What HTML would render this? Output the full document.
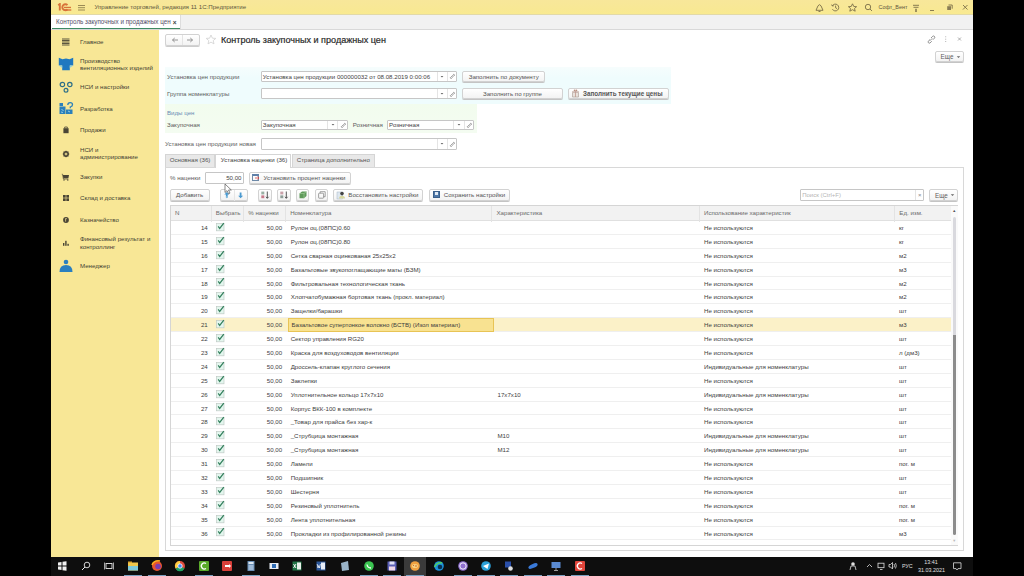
<!DOCTYPE html>
<html><head><meta charset="utf-8">
<style>
*{box-sizing:border-box;margin:0;padding:0}
html,body{width:1024px;height:576px;overflow:hidden;background:#000}
#wrap{position:absolute;left:0;top:0;width:1024px;height:576px;}
body{font-family:"Liberation Sans",sans-serif;font-size:6.15px;color:#4a4a4a;position:relative}
.a{position:absolute;white-space:nowrap;line-height:8px}
.box{position:absolute}
#scr{position:absolute;left:51px;top:0;width:922px;height:557px;background:#fff}
#top{position:absolute;left:51px;top:0;width:922px;height:15px;background:linear-gradient(#f8e79a,#f8e894 70%,#f9ea90);border-bottom:1px solid #e2d9a8}
#tabs{position:absolute;left:51px;top:15px;width:922px;height:15px;background:#f1f1f1;border-bottom:1px solid #d8d8d8}
#side{position:absolute;left:51px;top:30px;width:108px;height:527px;background:#f8e796}
#task{position:absolute;left:51px;top:557px;width:922px;height:19px;background:#0e0e0e}
.btn{position:absolute;border:1px solid #d2d2d2;border-radius:2px;background:linear-gradient(#fff,#f3f3f3);box-shadow:0 1px 0 #c4c4c4;display:flex;align-items:center;justify-content:center;color:#555;white-space:nowrap}
.btn.l{justify-content:flex-start}
.inp{position:absolute;border:1px solid #c6c6c6;border-radius:1px;background:#fff;display:flex;align-items:center;padding-left:1.2px;color:#444;white-space:nowrap}
.dd{position:absolute;top:0;bottom:0;border-left:1px solid #e4e4e4;display:flex;align-items:center;justify-content:center}
.dd svg{display:block}
.lbl{position:absolute;white-space:nowrap;line-height:8px;color:#5e5e5e}
.side .a{color:#433f34}
.row{position:absolute;left:171px;width:781px;height:13.89px;border-bottom:1px solid #efefef}
.row .c{position:absolute;top:0;line-height:13.3px;white-space:nowrap;color:#404040}
.cn{left:0;width:36.8px;text-align:right}
.cp{left:74px;width:37.2px;text-align:right}
.nm{left:119.7px}
.ch{left:326.5px}
.us{left:533px}
.un{left:728px}
.chk{position:absolute;left:45px;top:0.9px}
.sel{background:#fbf1c8}
.hl{top:0 !important;height:13.5px;line-height:11.5px !important;left:116.5px !important;width:206px;border:1px solid #e8c455;background:#f8e291;padding-left:3px}
.hdr{position:absolute;top:0;height:15.5px;line-height:13.9px;color:#6a6a6a;white-space:nowrap;border-right:1px solid #e3e3e3;padding-left:4px}
</style></head><body><div id="wrap">
<div id="scr"></div>
<!-- top bar -->
<div id="top"></div>
<svg class="box" style="left:57px;top:3px" width="16" height="9"><path d="M1.2 2.2 L2.8 1 L2.8 7.5" fill="none" stroke="#d8733a" stroke-width="1.9"/><path d="M10.5 2.2 A3 3 0 1 0 10.5 6.4" fill="none" stroke="#d8733a" stroke-width="1.9"/><rect x="7" y="3.8" width="7" height="1.3" fill="#d8733a"/><rect x="6.5" y="6.3" width="7.8" height="1.4" fill="#d8733a"/></svg>

<div class="box" style="left:78px;top:4.6px;width:7px;height:1px;background:#9a8a55;box-shadow:0 2.2px 0 #9a8a55,0 4.5px 0 #9a8a55"></div>
<div class="a" style="left:94.4px;top:3.1px;color:#615840">Управление торговлей, редакция 11 1С:Предприятие</div>
<!-- top right icons -->
<svg class="box" style="left:814px;top:2px" width="160" height="11" viewBox="0 0 160 11" fill="none" stroke="#7b6e48" stroke-width="0.9">
  <path d="M2 8.3 L4 3.8 Q5.5 1.5 7 3.8 L9 8.3 Z M4.5 9.5 L6.5 9.5"/>
  <path d="M18.3 4 A3.4 3.4 0 1 1 18.4 7.2 M18.3 4 L17.6 2.6 M18.3 4 L19.8 3.8 M21.6 3.6 L21.6 5.8 L23 6.6"/>
  <path d="M38.5 1.8 L39.8 4.5 L42.6 4.7 L40.5 6.5 L41.2 9.2 L38.5 7.7 L35.8 9.2 L36.5 6.5 L34.4 4.7 L37.2 4.5 Z"/>
  <circle cx="54" cy="5" r="2.7"/><path d="M56 7 L58 9"/>
  <path d="M99 3.3 L105 3.3 M99.5 5.3 L104.5 5.3 M101 7.3 L103 7.3"/><circle cx="102" cy="9" r="0.6" fill="#7b6e48"/>
  <path d="M116 8.5 L120 8.5"/>
  <rect x="133.2" y="4.2" width="3.8" height="3.8" fill="#8a7d55" stroke="none"/><path d="M134.5 3 L138.2 3 L138.2 6.7"/>
  <path d="M149 3 L153.5 7.5 M153.5 3 L149 7.5"/>
</svg>
<div class="a" style="left:878.5px;top:3.3px;color:#5e5540;font-size:5.45px">Софт_Вент</div>
<!-- tab bar -->
<div id="tabs"></div>
<div class="box" style="left:51px;top:15px;width:130px;height:14px;background:#fff;border-right:1px solid #ddd"></div>
<div class="box" style="left:52px;top:27.8px;width:128px;height:1.3px;background:#3e8a63"></div>
<div class="a" style="left:56px;top:18px;color:#55506a;font-size:6.3px">Контроль закупочных и продажных цен</div>
<div class="a" style="left:172.8px;top:18.6px;color:#444;font-size:6.5px;font-weight:bold">×</div>
<!-- sidebar -->
<div id="side"></div>
<div class="side">
<svg class="box" style="left:51px;top:31.50px" width="30" height="20" viewBox="-15 -10 30 20"><path d="M-4 -3 L3.5 -3 M-4 -1.5 L3.5 -1.5 M-4 0 L3.5 0 M-4 1.5 L3.5 1.5 M-4 3 L3.5 3" stroke="#4a4536" stroke-width="0.9"/></svg>
<div class="a" style="left:80px;top:37.50px">Главное</div>
<svg class="box" style="left:51px;top:54.40px" width="30" height="20" viewBox="-15 -10 30 20"><path d="M-7.2 -6.2 L-3.5 -4.8 L0 -5.4 L3.5 -4.8 L7.2 -6.2 L7.2 1.6 L3.8 1.6 L3.8 6.3 L-3.8 6.3 L-3.8 1.6 L-7.2 1.6 Z" fill="#1f78c0"/><path d="M-7.2 1.6 L-3.8 1.6 L-3.8 4 Z M7.2 1.6 L3.8 1.6 L3.8 4 Z" fill="#8fd0e0"/></svg>
<div class="a" style="left:80px;top:56.60px">Производство</div>
<div class="a" style="left:80px;top:64.20px">вентиляционных изделий</div>
<svg class="box" style="left:51px;top:77.30px" width="30" height="20" viewBox="-15 -10 30 20"><circle cx="-3.6" cy="-2.5" r="2.2" fill="none" stroke="#2d6f88" stroke-width="1.2"/><circle cx="3.8" cy="-2.5" r="2.2" fill="none" stroke="#2d6f88" stroke-width="1.2"/><circle cx="0" cy="3.3" r="1.9" fill="none" stroke="#2d6f88" stroke-width="1.2"/></svg>
<div class="a" style="left:80px;top:83.30px">НСИ и настройки</div>
<svg class="box" style="left:51px;top:98.70px" width="30" height="20" viewBox="-15 -10 30 20"><rect x="-6.5" y="-2.5" width="6" height="7.5" fill="#2a80bb"/><rect x="-6.5" y="-6" width="3.5" height="3" fill="#2a80bb"/><rect x="0" y="0.5" width="6.5" height="4.5" fill="#2a80bb"/><path d="M-4.5 0 L-2.5 2 M-5 3 L-3 3.5 M2 2 L4 3" stroke="#9fd4ea" stroke-width="0.9"/><path d="M1.8 -4 Q1.8 -6.3 4.2 -6.3 Q6.5 -6.3 6.5 -4.3 Q6.5 -2.8 4.3 -2 L4.3 -0.8" fill="none" stroke="#2a80bb" stroke-width="1.3"/></svg>
<div class="a" style="left:80px;top:104.70px">Разработка</div>
<svg class="box" style="left:51px;top:120.30px" width="30" height="20" viewBox="-15 -10 30 20"><rect x="-2.6" y="-1.8" width="5.2" height="5" fill="#4a4535"/><path d="M-1.3 -1.8 L-1.3 -3 L1.3 -3 L1.3 -1.8" fill="none" stroke="#4a4535" stroke-width="0.8"/></svg>
<div class="a" style="left:80px;top:126.30px">Продажи</div>
<svg class="box" style="left:51px;top:143.50px" width="30" height="20" viewBox="-15 -10 30 20"><circle cx="0" cy="0" r="2.2" fill="none" stroke="#4a4535" stroke-width="1.5"/><path d="M0 -3.3 L0 3.3 M-3.3 0 L3.3 0 M-2.3 -2.3 L2.3 2.3 M-2.3 2.3 L2.3 -2.3" stroke="#4a4535" stroke-width="0.8"/><circle r="1" fill="#f8e796"/></svg>
<div class="a" style="left:80px;top:145.70px">НСИ и</div>
<div class="a" style="left:80px;top:153.30px">администрирование</div>
<svg class="box" style="left:51px;top:166.75px" width="30" height="20" viewBox="-15 -10 30 20"><path d="M-3.3 -2 L3 -2 L2.4 1.2 L-2.6 1.2 Z" fill="#4a4535"/><path d="M-4.2 -2.8 L-3.4 -2.8 L-2.6 2 L2.2 2" fill="none" stroke="#4a4535" stroke-width="0.7"/><circle cx="-2" cy="3" r="0.7" fill="#4a4535"/><circle cx="1.8" cy="3" r="0.7" fill="#4a4535"/></svg>
<div class="a" style="left:80px;top:172.75px">Закупки</div>
<svg class="box" style="left:51px;top:188.00px" width="30" height="20" viewBox="-15 -10 30 20"><rect x="-3" y="-3" width="2.7" height="2.7" fill="#4a4535"/><rect x="0.3" y="-3" width="2.7" height="2.7" fill="#4a4535"/><rect x="-3" y="0.3" width="2.7" height="2.7" fill="#4a4535"/><rect x="0.3" y="0.3" width="2.7" height="2.7" fill="#4a4535"/></svg>
<div class="a" style="left:80px;top:194.00px">Склад и доставка</div>
<svg class="box" style="left:51px;top:209.50px" width="30" height="20" viewBox="-15 -10 30 20"><circle cx="0" cy="0" r="2.9" fill="#4a4535"/><path d="M-0.4 -1.4 L0.9 -1.4 M-0.4 -1.6 L-0.4 1.6" stroke="#f8e796" stroke-width="0.7"/></svg>
<div class="a" style="left:80px;top:215.50px">Казначейство</div>
<svg class="box" style="left:51px;top:232.75px" width="30" height="20" viewBox="-15 -10 30 20"><rect x="-3" y="0" width="1.4" height="2.8" fill="#4a4535"/><rect x="-0.8" y="-2.2" width="1.4" height="5" fill="#4a4535"/><rect x="1.4" y="0.8" width="1.4" height="2" fill="#4a4535"/></svg>
<div class="a" style="left:80px;top:234.95px">Финансовый результат и</div>
<div class="a" style="left:80px;top:242.55px">контроллинг</div>
<svg class="box" style="left:51px;top:256.25px" width="30" height="20" viewBox="-15 -10 30 20"><circle cx="0" cy="-4" r="2.3" fill="#2a7fbf"/><path d="M-6.5 6 Q-6.5 -1 0 -1 Q6.5 -1 6.5 6 Z" fill="#2a7fbf"/></svg>
<div class="a" style="left:80px;top:262.25px">Менеджер</div>
</div>
<!-- content header -->
<div class="btn" style="left:165px;top:34.3px;width:35px;height:11.3px;box-shadow:0 1px 0 #ccc"></div>
<div class="box" style="left:182px;top:35px;width:1px;height:10px;background:#e4e4e4"></div>
<svg class="box" style="left:165px;top:34px" width="36" height="12" fill="none" stroke="#888" stroke-width="0.9"><path d="M7.5 6 L13 6 M7.5 6 L9.7 4 M7.5 6 L9.7 8"/><path d="M22 6 L27.5 6 M27.5 6 L25.3 4 M27.5 6 L25.3 8"/></svg>
<svg class="box" style="left:205px;top:34px" width="12" height="12" fill="none" stroke="#d6d6d6" stroke-width="0.9"><path d="M6 1 L7.4 4.2 L10.8 4.4 L8.2 6.6 L9 9.9 L6 8.1 L3 9.9 L3.8 6.6 L1.2 4.4 L4.6 4.2 Z"/></svg>
<div class="a" style="left:221px;top:35px;font-size:9.05px;line-height:10px;color:#2a2a2a;-webkit-text-stroke:0.2px #2a2a2a">Контроль закупочных и продажных цен</div>
<svg class="box" style="left:925px;top:34px" width="42" height="10" fill="none" stroke="#777" stroke-width="0.8"><path d="M5 5.5 L3.2 7.3 A1.3 1.3 0 0 0 5 9 L6.8 7.2 M6 4 L7.8 2.2 A1.3 1.3 0 0 1 9.6 4 L7.8 5.8 M4.8 6.8 L7.2 4.4"/><path d="M20.7 2.5 L20.7 3.2 M20.7 4.8 L20.7 5.5 M20.7 7 L20.7 7.7"/><path d="M33 3.5 L36 6.5 M36 3.5 L33 6.5" stroke="#999"/></svg>
<div class="btn" style="left:935px;top:50.6px;width:28.5px;height:11.8px;color:#5e5e5e;font-size:6.3px;padding-left:3px;padding-top:0.5px">Еще<svg width="5" height="4" style="margin-left:2.5px"><path d="M0.8 1.2 L4.2 1.2 L2.5 3 Z" fill="#666"/></svg></div>

<!-- header form -->
<div class="box" style="left:165px;top:66.5px;width:506px;height:37.5px;background:linear-gradient(#f6fdfd,#effcfd 30%,#effcfd)"></div>
<div class="box" style="left:165px;top:104px;width:312px;height:29.2px;background:linear-gradient(#f2fcee,#f4fcf1)"></div>
<div class="lbl" style="left:167px;top:72.5px">Установка цен продукции</div>
<div class="inp" style="left:260.6px;top:70.7px;width:196.6px;height:11.2px">Установка цен продукции 000000032 от 08.08.2019 0:00:06<span class="dd" style="left:175px;width:10px"><svg width="4" height="3"><path d="M0.6 1 L3.4 1 L2 2.4 Z" fill="#666"/></svg></span><span class="dd" style="left:185px;width:10.6px"><svg width="6" height="6" fill="none" stroke="#777" stroke-width="0.7"><path d="M2.6 3.4 L1.3 4.7 A0.9 0.9 0 0 0 2.6 5.3 L3.6 4.3 M3.4 2.6 L4.7 1.3 A0.9 0.9 0 0 1 5.3 2.6 L4.3 3.6 M2.4 4 L4 2.4"/></svg></span></div>
<div class="btn" style="left:462px;top:70.7px;width:83.4px;height:11.2px">Заполнить по документу</div>
<div class="lbl" style="left:167px;top:89.6px">Группа номенклатуры</div>
<div class="inp" style="left:260.6px;top:88.3px;width:196.6px;height:10.9px"><span class="dd" style="left:175px;width:10px"><svg width="4" height="3"><path d="M0.6 1 L3.4 1 L2 2.4 Z" fill="#666"/></svg></span><span class="dd" style="left:185px;width:10.6px"><svg width="6" height="6" fill="none" stroke="#777" stroke-width="0.7"><path d="M2.6 3.4 L1.3 4.7 A0.9 0.9 0 0 0 2.6 5.3 L3.6 4.3 M3.4 2.6 L4.7 1.3 A0.9 0.9 0 0 1 5.3 2.6 L4.3 3.6 M2.4 4 L4 2.4"/></svg></span></div>
<div class="btn" style="left:462px;top:87.5px;width:101px;height:11.8px">Заполнить по группе</div>
<div class="btn l" style="left:568px;top:87.5px;width:101.4px;height:11.8px;font-weight:bold;color:#555;font-size:6.3px;padding-left:14px;padding-top:1px">Заполнить текущие цены</div>
<svg class="box" style="left:571px;top:89px" width="9" height="9"><path d="M1.5 3.5 L7.5 3.5 L7.5 8 L1.5 8 Z" fill="#e9e2dc" stroke="#b0a49c" stroke-width="0.7"/><path d="M1 2.2 L8 2.2 L8 3.6 L1 3.6 Z" fill="#d0bcb6"/><path d="M4.5 2.2 L4.5 8" stroke="#c09a90" stroke-width="0.8"/><circle cx="3.6" cy="1.4" r="0.9" fill="#b89080"/><circle cx="5.4" cy="1.4" r="0.9" fill="#b89080"/></svg>
<div class="lbl" style="left:167px;top:109px;color:#6a8cb5">Виды цен</div>
<div class="lbl" style="left:167px;top:121px">Закупочная</div>
<div class="inp" style="left:260.6px;top:119.6px;width:87px;height:10.8px">Закупочная<span class="dd" style="left:65.8px;width:10px"><svg width="4" height="3"><path d="M0.6 1 L3.4 1 L2 2.4 Z" fill="#666"/></svg></span><span class="dd" style="left:75.8px;width:10px"><svg width="6" height="6" fill="none" stroke="#777" stroke-width="0.7"><path d="M2.6 3.4 L1.3 4.7 A0.9 0.9 0 0 0 2.6 5.3 L3.6 4.3 M3.4 2.6 L4.7 1.3 A0.9 0.9 0 0 1 5.3 2.6 L4.3 3.6 M2.4 4 L4 2.4"/></svg></span></div>
<div class="lbl" style="left:352.7px;top:121px">Розничная</div>
<div class="inp" style="left:386.9px;top:119.6px;width:87.5px;height:10.8px">Розничная<span class="dd" style="left:65.4px;width:10.5px"><svg width="4" height="3"><path d="M0.6 1 L3.4 1 L2 2.4 Z" fill="#666"/></svg></span><span class="dd" style="left:76px;width:10px"><svg width="6" height="6" fill="none" stroke="#777" stroke-width="0.7"><path d="M2.6 3.4 L1.3 4.7 A0.9 0.9 0 0 0 2.6 5.3 L3.6 4.3 M3.4 2.6 L4.7 1.3 A0.9 0.9 0 0 1 5.3 2.6 L4.3 3.6 M2.4 4 L4 2.4"/></svg></span></div>
<div class="lbl" style="left:165px;top:139.7px">Установка цен продукции новая</div>
<div class="inp" style="left:260.6px;top:138px;width:196.6px;height:11.5px"><span class="dd" style="left:175px;width:10px"><svg width="4" height="3"><path d="M0.6 1 L3.4 1 L2 2.4 Z" fill="#666"/></svg></span><span class="dd" style="left:185px;width:10.6px"><svg width="6" height="6" fill="none" stroke="#777" stroke-width="0.7"><path d="M2.6 3.4 L1.3 4.7 A0.9 0.9 0 0 0 2.6 5.3 L3.6 4.3 M3.4 2.6 L4.7 1.3 A0.9 0.9 0 0 1 5.3 2.6 L4.3 3.6 M2.4 4 L4 2.4"/></svg></span></div>

<!-- tabs -->
<div class="box" style="left:164.5px;top:167px;width:799px;height:383.5px;border:1px solid #d8d8d8"></div>
<div class="box" style="left:164.7px;top:154.3px;width:50.7px;height:13px;background:#e8e8e8;border:1px solid #d5d5d5;border-bottom:none"></div>
<div class="box" style="left:215.4px;top:154px;width:76px;height:14px;background:#fff;border:1px solid #d5d5d5;border-bottom:none"></div>
<div class="box" style="left:291.5px;top:154.3px;width:83px;height:13px;background:#e8e8e8;border:1px solid #d5d5d5;border-bottom:none"></div>
<div class="a" style="left:169.7px;top:156.3px;color:#555">Основная (36)</div>
<div class="a" style="left:220.8px;top:156.3px;color:#444">Установка наценки (36)</div>
<div class="a" style="left:296.8px;top:156.3px;color:#555">Страница дополнительно</div>

<div class="lbl" style="left:170px;top:173.7px">% наценки</div>
<div class="inp" style="left:204.7px;top:171.8px;width:39px;height:11.8px;justify-content:flex-end;padding-right:1.2px">50,00</div>
<div class="btn l" style="left:248.5px;top:171.8px;width:102.3px;height:11.8px;padding-left:14px">Установить процент наценки</div>
<div class="box" style="left:252px;top:174px;width:7px;height:6.5px;border:1px solid #6d89a8;border-top:2px solid #5d7fa8"></div>
<svg class="box" style="left:255px;top:176px" width="5" height="4"><path d="M0 2 L4 2 M2.5 0.5 L4 2 L2.5 3.5" stroke="#c44" stroke-width="0.8" fill="none"/></svg>

<!-- toolbar -->
<div class="btn" style="left:169.7px;top:188.7px;width:40px;height:12.3px">Добавить</div>
<div class="btn" style="left:219.7px;top:188.7px;width:28.7px;height:12.3px"></div>
<div class="box" style="left:234px;top:189.5px;width:1px;height:11px;background:#e6e6e6"></div>
<svg class="box" style="left:222px;top:190px" width="26" height="10"><path d="M4.8 2 L7.3 4.6 L5.7 4.6 L5.7 7.8 L3.9 7.8 L3.9 4.6 L2.3 4.6 Z" fill="#4b9ad0"/><path d="M3.9 6.2 L5.7 6.2 L4.8 8.6 Z" fill="#8fc4e6"/><path d="M18.6 8.3 L21.1 5.7 L19.5 5.7 L19.5 2.5 L17.7 2.5 L17.7 5.7 L16.1 5.7 Z" fill="#4b9ad0"/></svg>
<div class="btn" style="left:258.4px;top:188.7px;width:14px;height:12.3px"></div>
<svg class="box" style="left:258.4px;top:188.7px" width="14" height="12"><rect x="3.3" y="2.6" width="3" height="2.8" fill="#9ab0a4"/><rect x="3.3" y="6.4" width="3" height="2.8" fill="#c77a8a"/><path d="M9.3 2.5 L9.3 9.2 M8 7.8 L9.3 9.3 L10.6 7.8" stroke="#444" stroke-width="0.9" fill="none"/></svg>
<div class="btn" style="left:277.1px;top:188.7px;width:13.5px;height:12.3px"></div>
<svg class="box" style="left:277.1px;top:188.7px" width="14" height="12"><rect x="3.3" y="2.6" width="3" height="2.8" fill="#c9a0a8"/><rect x="3.3" y="6.4" width="3" height="2.8" fill="#8e9e98"/><path d="M9.3 2.5 L9.3 9.2 M8 7.8 L9.3 9.3 L10.6 7.8" stroke="#444" stroke-width="0.9" fill="none"/></svg>
<div class="btn" style="left:295.9px;top:188.7px;width:13.5px;height:12.3px"></div>
<svg class="box" style="left:295.9px;top:188.7px" width="14" height="12"><path d="M3.5 4.5 L6 2.5 L10.5 2.5 L10.5 7 L8 9.3 L3.5 9.3 Z" fill="#5f9a5a"/><path d="M3.5 4.5 L8 4.5 L8 9.3 M8 4.5 L10.5 2.5" stroke="#a8d0a0" stroke-width="0.6" fill="none"/></svg>
<div class="btn" style="left:314.6px;top:188.7px;width:13.5px;height:12.3px"></div>
<svg class="box" style="left:314.6px;top:188.7px" width="14" height="12" fill="none" stroke="#8a8a8a" stroke-width="0.8"><rect x="3.6" y="4.2" width="5" height="5" rx="0.6"/><path d="M5.2 4.2 L5.2 2.7 L10.2 2.7 L10.2 7.7 L8.6 7.7"/></svg>
<div class="btn l" style="left:333.3px;top:188.7px;width:90.2px;height:12.3px;padding-left:14px">Восстановить настройки</div>
<svg class="box" style="left:336px;top:189.5px" width="10" height="10"><rect x="1" y="2" width="5.5" height="7" fill="#dfe8f0" stroke="#a8b8c8" stroke-width="0.5"/><path d="M3 8.5 Q3 5.8 6 5.8 Q9 5.8 9 8.5 Z" fill="#d8d8a0"/><circle cx="6" cy="3.6" r="1.8" fill="#444"/></svg>
<div class="btn l" style="left:428.8px;top:188.7px;width:81.6px;height:12.3px;padding-left:14px">Сохранить настройки</div>
<div class="box" style="left:432.5px;top:191px;width:7px;height:7px;background:#4f78a8;border:1px solid #3a5f8a"><div style="position:absolute;left:1px;top:0;width:3.5px;height:2.5px;background:#dfe8f2"></div></div>

<div class="inp" style="left:800px;top:189.1px;width:124.2px;height:11.8px;color:#b5b5b5;font-size:6px">Поиск (Ctrl+F)<span class="dd" style="left:113.5px;width:9.7px;color:#888">×</span></div>
<div class="btn" style="left:929.3px;top:189px;width:28.6px;height:12px;font-size:6.3px;color:#5e5e5e;padding-left:3px;padding-top:0.5px">Еще<svg width="5" height="4" style="margin-left:2.5px"><path d="M0.8 1.2 L4.2 1.2 L2.5 3 Z" fill="#666"/></svg></div>

<!-- table -->
<div class="box" style="left:170px;top:205px;width:788px;height:341px;border:1px solid #d5d5d5;background:#fff"></div>
<div class="box" style="left:171px;top:206px;width:780px;height:15px;background:#f2f2f2;border-bottom:1px solid #e0e0e0"></div>
<div class="box" style="left:171px;top:206px">
  <div class="hdr" style="left:0;width:40.8px">N</div>
  <div class="hdr" style="left:40.8px;width:32.5px">Выбрать</div>
  <div class="hdr" style="left:73.3px;width:41.9px">% наценки</div>
  <div class="hdr" style="left:115.2px;width:206.3px">Номенклатура</div>
  <div class="hdr" style="left:321.5px;width:207.5px">Характеристика</div>
  <div class="hdr" style="left:529px;width:195.3px">Использование характеристик</div>
  <div class="hdr" style="left:724.3px;width:56px;border-right:none">Ед. изм.</div>
</div>
<div class="row" style="top:221.00px"><span class="c cn">14</span><svg class="chk" width="10" height="10"><rect x="0.6" y="1.6" width="7.4" height="7.2" fill="#e3f6ee" stroke="#bfcac5" stroke-width="0.7"/><path d="M2.2 4.4 L3.7 6.5 L7.8 1.2" fill="none" stroke="#35805e" stroke-width="1.25"/></svg><span class="c cp">50,00</span><span class="c nm">Рулон оц.(08ПС)0.60</span><span class="c ch"></span><span class="c us">Не используются</span><span class="c un">кг</span></div>
<div class="row" style="top:234.89px"><span class="c cn">15</span><svg class="chk" width="10" height="10"><rect x="0.6" y="1.6" width="7.4" height="7.2" fill="#e3f6ee" stroke="#bfcac5" stroke-width="0.7"/><path d="M2.2 4.4 L3.7 6.5 L7.8 1.2" fill="none" stroke="#35805e" stroke-width="1.25"/></svg><span class="c cp">50,00</span><span class="c nm">Рулон оц.(08ПС)0.80</span><span class="c ch"></span><span class="c us">Не используются</span><span class="c un">кг</span></div>
<div class="row" style="top:248.78px"><span class="c cn">16</span><svg class="chk" width="10" height="10"><rect x="0.6" y="1.6" width="7.4" height="7.2" fill="#e3f6ee" stroke="#bfcac5" stroke-width="0.7"/><path d="M2.2 4.4 L3.7 6.5 L7.8 1.2" fill="none" stroke="#35805e" stroke-width="1.25"/></svg><span class="c cp">50,00</span><span class="c nm">Сетка сварная оцинкованая 25х25х2</span><span class="c ch"></span><span class="c us">Не используются</span><span class="c un">м2</span></div>
<div class="row" style="top:262.67px"><span class="c cn">17</span><svg class="chk" width="10" height="10"><rect x="0.6" y="1.6" width="7.4" height="7.2" fill="#e3f6ee" stroke="#bfcac5" stroke-width="0.7"/><path d="M2.2 4.4 L3.7 6.5 L7.8 1.2" fill="none" stroke="#35805e" stroke-width="1.25"/></svg><span class="c cp">50,00</span><span class="c nm">Базальтовые звукопоглащающие маты (БЗМ)</span><span class="c ch"></span><span class="c us">Не используются</span><span class="c un">м3</span></div>
<div class="row" style="top:276.56px"><span class="c cn">18</span><svg class="chk" width="10" height="10"><rect x="0.6" y="1.6" width="7.4" height="7.2" fill="#e3f6ee" stroke="#bfcac5" stroke-width="0.7"/><path d="M2.2 4.4 L3.7 6.5 L7.8 1.2" fill="none" stroke="#35805e" stroke-width="1.25"/></svg><span class="c cp">50,00</span><span class="c nm">Фильтровальная технологическая ткань</span><span class="c ch"></span><span class="c us">Не используются</span><span class="c un">м2</span></div>
<div class="row" style="top:290.45px"><span class="c cn">19</span><svg class="chk" width="10" height="10"><rect x="0.6" y="1.6" width="7.4" height="7.2" fill="#e3f6ee" stroke="#bfcac5" stroke-width="0.7"/><path d="M2.2 4.4 L3.7 6.5 L7.8 1.2" fill="none" stroke="#35805e" stroke-width="1.25"/></svg><span class="c cp">50,00</span><span class="c nm">Хлопчатобумажная бортовая ткань (прокл. материал)</span><span class="c ch"></span><span class="c us">Не используются</span><span class="c un">м2</span></div>
<div class="row" style="top:304.34px"><span class="c cn">20</span><svg class="chk" width="10" height="10"><rect x="0.6" y="1.6" width="7.4" height="7.2" fill="#e3f6ee" stroke="#bfcac5" stroke-width="0.7"/><path d="M2.2 4.4 L3.7 6.5 L7.8 1.2" fill="none" stroke="#35805e" stroke-width="1.25"/></svg><span class="c cp">50,00</span><span class="c nm">Защелки/барашки</span><span class="c ch"></span><span class="c us">Не используются</span><span class="c un">шт</span></div>
<div class="row sel" style="top:318.23px"><span class="c cn">21</span><svg class="chk" width="10" height="10"><rect x="0.6" y="1.6" width="7.4" height="7.2" fill="#e3f6ee" stroke="#bfcac5" stroke-width="0.7"/><path d="M2.2 4.4 L3.7 6.5 L7.8 1.2" fill="none" stroke="#35805e" stroke-width="1.25"/></svg><span class="c cp">50,00</span><span class="c nm hl">Базальтовое супертонкое волокно (БСТВ) (Изол материал)</span><span class="c ch"></span><span class="c us">Не используются</span><span class="c un">м3</span></div>
<div class="row" style="top:332.12px"><span class="c cn">22</span><svg class="chk" width="10" height="10"><rect x="0.6" y="1.6" width="7.4" height="7.2" fill="#e3f6ee" stroke="#bfcac5" stroke-width="0.7"/><path d="M2.2 4.4 L3.7 6.5 L7.8 1.2" fill="none" stroke="#35805e" stroke-width="1.25"/></svg><span class="c cp">50,00</span><span class="c nm">Сектор управления RG20</span><span class="c ch"></span><span class="c us">Не используются</span><span class="c un">шт</span></div>
<div class="row" style="top:346.01px"><span class="c cn">23</span><svg class="chk" width="10" height="10"><rect x="0.6" y="1.6" width="7.4" height="7.2" fill="#e3f6ee" stroke="#bfcac5" stroke-width="0.7"/><path d="M2.2 4.4 L3.7 6.5 L7.8 1.2" fill="none" stroke="#35805e" stroke-width="1.25"/></svg><span class="c cp">50,00</span><span class="c nm">Краска для воздуховодов вентиляции</span><span class="c ch"></span><span class="c us">Не используются</span><span class="c un">л (дм3)</span></div>
<div class="row" style="top:359.90px"><span class="c cn">24</span><svg class="chk" width="10" height="10"><rect x="0.6" y="1.6" width="7.4" height="7.2" fill="#e3f6ee" stroke="#bfcac5" stroke-width="0.7"/><path d="M2.2 4.4 L3.7 6.5 L7.8 1.2" fill="none" stroke="#35805e" stroke-width="1.25"/></svg><span class="c cp">50,00</span><span class="c nm">Дроссель-клапан круглого сечения</span><span class="c ch"></span><span class="c us">Индивидуальные для номенклатуры</span><span class="c un">шт</span></div>
<div class="row" style="top:373.79px"><span class="c cn">25</span><svg class="chk" width="10" height="10"><rect x="0.6" y="1.6" width="7.4" height="7.2" fill="#e3f6ee" stroke="#bfcac5" stroke-width="0.7"/><path d="M2.2 4.4 L3.7 6.5 L7.8 1.2" fill="none" stroke="#35805e" stroke-width="1.25"/></svg><span class="c cp">50,00</span><span class="c nm">Заклепки</span><span class="c ch"></span><span class="c us">Не используются</span><span class="c un">шт</span></div>
<div class="row" style="top:387.68px"><span class="c cn">26</span><svg class="chk" width="10" height="10"><rect x="0.6" y="1.6" width="7.4" height="7.2" fill="#e3f6ee" stroke="#bfcac5" stroke-width="0.7"/><path d="M2.2 4.4 L3.7 6.5 L7.8 1.2" fill="none" stroke="#35805e" stroke-width="1.25"/></svg><span class="c cp">50,00</span><span class="c nm">Уплотнительное кольцо 17х7х10</span><span class="c ch">17х7х10</span><span class="c us">Индивидуальные для номенклатуры</span><span class="c un">шт</span></div>
<div class="row" style="top:401.57px"><span class="c cn">27</span><svg class="chk" width="10" height="10"><rect x="0.6" y="1.6" width="7.4" height="7.2" fill="#e3f6ee" stroke="#bfcac5" stroke-width="0.7"/><path d="M2.2 4.4 L3.7 6.5 L7.8 1.2" fill="none" stroke="#35805e" stroke-width="1.25"/></svg><span class="c cp">50,00</span><span class="c nm">Корпус ВКК-100 в комплекте</span><span class="c ch"></span><span class="c us">Не используются</span><span class="c un">шт</span></div>
<div class="row" style="top:415.46px"><span class="c cn">28</span><svg class="chk" width="10" height="10"><rect x="0.6" y="1.6" width="7.4" height="7.2" fill="#e3f6ee" stroke="#bfcac5" stroke-width="0.7"/><path d="M2.2 4.4 L3.7 6.5 L7.8 1.2" fill="none" stroke="#35805e" stroke-width="1.25"/></svg><span class="c cp">50,00</span><span class="c nm">_Товар для прайса без хар-к</span><span class="c ch"></span><span class="c us">Не используются</span><span class="c un">шт</span></div>
<div class="row" style="top:429.35px"><span class="c cn">29</span><svg class="chk" width="10" height="10"><rect x="0.6" y="1.6" width="7.4" height="7.2" fill="#e3f6ee" stroke="#bfcac5" stroke-width="0.7"/><path d="M2.2 4.4 L3.7 6.5 L7.8 1.2" fill="none" stroke="#35805e" stroke-width="1.25"/></svg><span class="c cp">50,00</span><span class="c nm">_Струбцица монтажная</span><span class="c ch">М10</span><span class="c us">Индивидуальные для номенклатуры</span><span class="c un">шт</span></div>
<div class="row" style="top:443.24px"><span class="c cn">30</span><svg class="chk" width="10" height="10"><rect x="0.6" y="1.6" width="7.4" height="7.2" fill="#e3f6ee" stroke="#bfcac5" stroke-width="0.7"/><path d="M2.2 4.4 L3.7 6.5 L7.8 1.2" fill="none" stroke="#35805e" stroke-width="1.25"/></svg><span class="c cp">50,00</span><span class="c nm">_Струбцица монтажная</span><span class="c ch">М12</span><span class="c us">Индивидуальные для номенклатуры</span><span class="c un">шт</span></div>
<div class="row" style="top:457.13px"><span class="c cn">31</span><svg class="chk" width="10" height="10"><rect x="0.6" y="1.6" width="7.4" height="7.2" fill="#e3f6ee" stroke="#bfcac5" stroke-width="0.7"/><path d="M2.2 4.4 L3.7 6.5 L7.8 1.2" fill="none" stroke="#35805e" stroke-width="1.25"/></svg><span class="c cp">50,00</span><span class="c nm">Ламели</span><span class="c ch"></span><span class="c us">Не используются</span><span class="c un">пог. м</span></div>
<div class="row" style="top:471.02px"><span class="c cn">32</span><svg class="chk" width="10" height="10"><rect x="0.6" y="1.6" width="7.4" height="7.2" fill="#e3f6ee" stroke="#bfcac5" stroke-width="0.7"/><path d="M2.2 4.4 L3.7 6.5 L7.8 1.2" fill="none" stroke="#35805e" stroke-width="1.25"/></svg><span class="c cp">50,00</span><span class="c nm">Подшипник</span><span class="c ch"></span><span class="c us">Не используются</span><span class="c un">шт</span></div>
<div class="row" style="top:484.91px"><span class="c cn">33</span><svg class="chk" width="10" height="10"><rect x="0.6" y="1.6" width="7.4" height="7.2" fill="#e3f6ee" stroke="#bfcac5" stroke-width="0.7"/><path d="M2.2 4.4 L3.7 6.5 L7.8 1.2" fill="none" stroke="#35805e" stroke-width="1.25"/></svg><span class="c cp">50,00</span><span class="c nm">Шестерня</span><span class="c ch"></span><span class="c us">Не используются</span><span class="c un">шт</span></div>
<div class="row" style="top:498.80px"><span class="c cn">34</span><svg class="chk" width="10" height="10"><rect x="0.6" y="1.6" width="7.4" height="7.2" fill="#e3f6ee" stroke="#bfcac5" stroke-width="0.7"/><path d="M2.2 4.4 L3.7 6.5 L7.8 1.2" fill="none" stroke="#35805e" stroke-width="1.25"/></svg><span class="c cp">50,00</span><span class="c nm">Резиновый уплотнитель</span><span class="c ch"></span><span class="c us">Не используются</span><span class="c un">пог. м</span></div>
<div class="row" style="top:512.69px"><span class="c cn">35</span><svg class="chk" width="10" height="10"><rect x="0.6" y="1.6" width="7.4" height="7.2" fill="#e3f6ee" stroke="#bfcac5" stroke-width="0.7"/><path d="M2.2 4.4 L3.7 6.5 L7.8 1.2" fill="none" stroke="#35805e" stroke-width="1.25"/></svg><span class="c cp">50,00</span><span class="c nm">Лента уплотнительная</span><span class="c ch"></span><span class="c us">Не используются</span><span class="c un">пог. м</span></div>
<div class="row" style="top:526.58px"><span class="c cn">36</span><svg class="chk" width="10" height="10"><rect x="0.6" y="1.6" width="7.4" height="7.2" fill="#e3f6ee" stroke="#bfcac5" stroke-width="0.7"/><path d="M2.2 4.4 L3.7 6.5 L7.8 1.2" fill="none" stroke="#35805e" stroke-width="1.25"/></svg><span class="c cp">50,00</span><span class="c nm">Прокладки из профилированной резины</span><span class="c ch"></span><span class="c us">Не используются</span><span class="c un">м3</span></div>
<!-- scrollbar -->
<div class="box" style="left:951px;top:206px;width:6.5px;height:339px;background:#fafafa"></div>
<div class="box" style="left:952.6px;top:217px;width:3.8px;height:119px;background:#d9d9de;border-radius:1.5px 1.5px 0 0"></div>
<div class="box" style="left:952.6px;top:335px;width:3.8px;height:199.5px;background:#8c8c8c;border-radius:0 0 1.5px 1.5px"></div>
<div class="a" style="left:952.2px;top:208px;font-size:4px;color:#555;line-height:5px">▲</div>
<div class="a" style="left:952.2px;top:537.5px;font-size:4px;color:#bbb;line-height:5px">▼</div>

<!-- cursor -->
<svg class="box" style="left:224px;top:183px" width="10" height="12"><path d="M1 1 L1 9.5 L3 7.6 L4.6 10.8 L6 10.1 L4.5 7 L7.3 7 Z" fill="#fff" stroke="#555" stroke-width="0.7"/></svg>

<!-- taskbar -->
<div id="task"></div>
<div class="box" style="left:403.8px;top:557px;width:22.5px;height:19px;background:#3a3a3a"></div>
<svg class="box" style="left:53.8px;top:558px" width="16" height="16" viewBox="-8 -8 16 16"><path d="M-4 -3.5 L-0.5 -4 L-0.5 -0.5 L-4 -0.5 Z M0.5 -4.2 L4.5 -4.8 L4.5 -0.5 L0.5 -0.5 Z M-4 0.5 L-0.5 0.5 L-0.5 4 L-4 3.5 Z M0.5 0.5 L4.5 0.5 L4.5 4.8 L0.5 4.2 Z" fill="#f2f2f2"/></svg>
<svg class="box" style="left:77.7px;top:558px" width="16" height="16" viewBox="-8 -8 16 16"><circle cx="1" cy="-1" r="2.8" fill="none" stroke="#e8e8e8" stroke-width="0.9"/><path d="M-1 1 L-4 4" stroke="#e8e8e8" stroke-width="1"/></svg>
<svg class="box" style="left:100.6px;top:558px" width="16" height="16" viewBox="-8 -8 16 16"><rect x="-3" y="-2.5" width="6" height="5" fill="none" stroke="#e8e8e8" stroke-width="0.9"/><path d="M-4.5 -3.5 L-4.5 3.5 M4.5 -3.5 L4.5 3.5" stroke="#e8e8e8" stroke-width="0.7"/></svg>
<svg class="box" style="left:125.0px;top:558px" width="16" height="16" viewBox="-8 -8 16 16"><rect x="-5" y="-3.5" width="10" height="8" fill="#f0c64a"/><rect x="-5" y="0" width="10" height="4.5" fill="#7ec8d8"/><rect x="-5" y="-4.5" width="4" height="1.5" fill="#e0a830"/></svg>
<svg class="box" style="left:148.7px;top:558px" width="16" height="16" viewBox="-8 -8 16 16"><circle r="5" fill="#e8542e"/><circle cx="1" cy="0.5" r="2.8" fill="#7a3fb0"/><path d="M-5 -1 Q-3 -6 3 -5" stroke="#ffb020" stroke-width="1.5" fill="none"/></svg>
<svg class="box" style="left:172.0px;top:558px" width="16" height="16" viewBox="-8 -8 16 16"><circle r="5" fill="#dd4b3e"/><path d="M0 0 L4.5 2.5 A5 5 0 0 1 -4.5 2.5 Z" fill="#1fa463"/><path d="M0 0 L-4.5 2.5 A5 5 0 0 1 0 -5 Z" fill="#ffcd40"/><circle r="2.2" fill="#4285f4" stroke="#fff" stroke-width="0.8"/></svg>
<svg class="box" style="left:195.5px;top:558px" width="16" height="16" viewBox="-8 -8 16 16"><rect x="-5" y="-5" width="10" height="10" rx="1" fill="#5aaa2a"/><path d="M2 -2.5 A3 3 0 1 0 2 2.5" stroke="#fff" stroke-width="1.3" fill="none"/></svg>
<svg class="box" style="left:219.0px;top:558px" width="16" height="16" viewBox="-8 -8 16 16"><rect x="-5" y="-5" width="10" height="10" rx="1" fill="#d9403a"/><path d="M-2 -1 L2 -1 L2 -2 L4 0 L2 2 L2 1 L-2 1 Z" fill="#fff"/></svg>
<svg class="box" style="left:243.0px;top:558px" width="16" height="16" viewBox="-8 -8 16 16"><rect x="-3.5" y="-5" width="7" height="10" fill="#6b8fb5"/><rect x="-2.5" y="-4" width="5" height="2" fill="#dde8f0"/><rect x="-2.5" y="-1" width="5" height="5" fill="#9fbad6"/></svg>
<svg class="box" style="left:265.8px;top:558px" width="16" height="16" viewBox="-8 -8 16 16"><rect x="-4.5" y="-3" width="9" height="6" fill="#e8eef5"/><rect x="-2" y="-2" width="4" height="4" fill="#2f6db5"/></svg>
<svg class="box" style="left:289.4px;top:558px" width="16" height="16" viewBox="-8 -8 16 16"><rect x="-4.5" y="-4.5" width="9" height="9" fill="#1f7244"/><rect x="0" y="-3.5" width="4" height="7" fill="#e8f0ea"/><path d="M-3.5 -2 L-1 2 M-1 -2 L-3.5 2" stroke="#fff" stroke-width="0.9"/></svg>
<svg class="box" style="left:313.3px;top:558px" width="16" height="16" viewBox="-8 -8 16 16"><rect x="-4.5" y="-4.5" width="9" height="9" fill="#2b579a"/><rect x="0" y="-3.5" width="4" height="7" fill="#e8eef8"/><path d="M-3.8 -2 L-3 2 L-2.2 -0.5 L-1.4 2 L-0.6 -2" stroke="#fff" stroke-width="0.7" fill="none"/></svg>
<svg class="box" style="left:337.2px;top:558px" width="16" height="16" viewBox="-8 -8 16 16"><path d="M-4 -3 L3 -5 L4 4 L-3 5 Z" fill="#9ab4c8"/></svg>
<svg class="box" style="left:360.8px;top:558px" width="16" height="16" viewBox="-8 -8 16 16"><circle r="4.8" fill="#3cc552"/><path d="M-2 -1.5 Q-1.5 2 2 2" stroke="#fff" stroke-width="1.3" fill="none"/></svg>
<svg class="box" style="left:383.6px;top:558px" width="16" height="16" viewBox="-8 -8 16 16"><rect x="-4.5" y="-4.5" width="9" height="9" fill="#5a5fb5"/><rect x="-2.5" y="-4.5" width="5" height="3" fill="#dfe0f5"/><rect x="-3" y="0.5" width="6" height="4" fill="#f0d8e8"/></svg>
<svg class="box" style="left:407.0px;top:558px" width="16" height="16" viewBox="-8 -8 16 16"><circle r="4.8" fill="#f0a040"/><ellipse rx="3" ry="2" fill="#f7d080"/><path d="M-2 -0.5 L-1 -0.5 M0 0 L2 0" stroke="#c05020" stroke-width="0.8"/></svg>
<svg class="box" style="left:431.0px;top:558px" width="16" height="16" viewBox="-8 -8 16 16"><circle r="4.8" fill="#1c8fd8"/><circle cx="1" cy="1" r="2.3" fill="#0a3050"/><path d="M-4.5 1 Q-2 -4 3 -3" stroke="#52d060" stroke-width="1.5" fill="none"/></svg>
<svg class="box" style="left:454.5px;top:558px" width="16" height="16" viewBox="-8 -8 16 16"><circle r="4.8" fill="#8f6fd0"/><circle r="3.2" fill="none" stroke="#fff" stroke-width="0.9"/></svg>
<svg class="box" style="left:478.0px;top:558px" width="16" height="16" viewBox="-8 -8 16 16"><circle r="4.8" fill="#2aa0d8"/><path d="M-3 0 L3 -2.5 L1.5 3 Z" fill="#fff"/></svg>
<svg class="box" style="left:501.4px;top:558px" width="16" height="16" viewBox="-8 -8 16 16"><rect x="-4" y="-4.5" width="6" height="6" fill="#2a4fa8"/><circle cx="1.5" cy="2.5" r="2.3" fill="#ddd"/></svg>
<svg class="box" style="left:524.8px;top:558px" width="16" height="16" viewBox="-8 -8 16 16"><ellipse rx="5" ry="2" transform="rotate(-25)" fill="#3a7ad8"/></svg>
<svg class="box" style="left:548.2px;top:558px" width="16" height="16" viewBox="-8 -8 16 16"><rect x="-4.5" y="-4" width="9" height="6" fill="#5a8ad0"/><path d="M-2 4.5 L2 4.5 M0 2 L0 4.5" stroke="#bbb" stroke-width="0.8"/></svg>
<svg class="box" style="left:571.7px;top:558px" width="16" height="16" viewBox="-8 -8 16 16"><rect x="-5" y="-5" width="10" height="10" rx="1" fill="#e0443a"/><path d="M2 -2.5 A3 3 0 1 0 2 2.5" stroke="#fff" stroke-width="1.3" fill="none"/></svg>
<div class="box" style="left:124.0px;top:575px;width:18px;height:1px;background:#7aa0c0"></div>
<div class="box" style="left:147.7px;top:575px;width:18px;height:1px;background:#7aa0c0"></div>
<div class="box" style="left:194.5px;top:575px;width:18px;height:1px;background:#7aa0c0"></div>
<div class="box" style="left:242.0px;top:575px;width:18px;height:1px;background:#7aa0c0"></div>
<div class="box" style="left:359.8px;top:575px;width:18px;height:1px;background:#7aa0c0"></div>
<div class="box" style="left:382.6px;top:575px;width:18px;height:1px;background:#7aa0c0"></div>
<div class="box" style="left:406.0px;top:575px;width:18px;height:1px;background:#7aa0c0"></div>
<div class="box" style="left:453.5px;top:575px;width:18px;height:1px;background:#7aa0c0"></div>
<div class="box" style="left:477.0px;top:575px;width:18px;height:1px;background:#7aa0c0"></div>
<div class="box" style="left:500.4px;top:575px;width:18px;height:1px;background:#7aa0c0"></div>
<div class="box" style="left:523.8px;top:575px;width:18px;height:1px;background:#7aa0c0"></div>
<div class="box" style="left:547.2px;top:575px;width:18px;height:1px;background:#7aa0c0"></div>
<div class="box" style="left:570.7px;top:575px;width:18px;height:1px;background:#7aa0c0"></div>
<svg class="box" style="left:845px;top:559px" width="120" height="14" fill="none" stroke="#e0e0e0" stroke-width="0.8"><circle cx="8" cy="5" r="1.8" fill="#e0e0e0" stroke="none"/><path d="M5 11 L6 7 L10 7 L11 11"/><path d="M22 8 L24.5 5.5 L27 8"/><rect x="33" y="4.2" width="6" height="4.5"/><path d="M35 10.5 L37.5 10.5"/><path d="M44 5.5 L45.5 5.5 L47.5 3.5 L47.5 10 L45.5 8 L44 8 Z"/><path d="M49 5 Q50 6.7 49 8.5 M50.5 4 Q52 6.7 50.5 9.5"/><path d="M108.5 3.8 L116 3.8 L116 9.6 L113 9.6 L112 11 L111 9.6 L108.5 9.6 Z"/></svg>
<div class="a" style="left:902px;top:562.5px;color:#e0e0e0;font-size:5.3px;line-height:7px">РУС</div>
<div class="a" style="left:918px;top:558.3px;width:26px;text-align:center;color:#e0e0e0;font-size:5.4px;line-height:8px">13:41<br>31.03.2021</div>
</div></body></html>
